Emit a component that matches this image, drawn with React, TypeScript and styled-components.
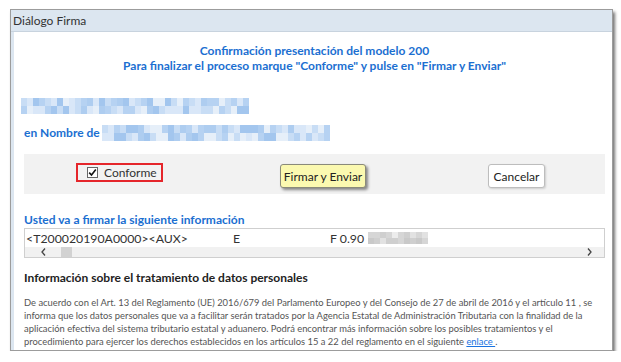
import React from 'react';
import styled, { createGlobalStyle } from 'styled-components';

const GlobalStyle = createGlobalStyle`
  html, body {
    margin: 0;
    padding: 0;
    background: #fff;
  }
  body {
    font-family: Lato, "Open Sans", sans-serif;
    color: #333;
  }
`;

const Page = styled.div`
  padding: 9px 0 0 10px;
`;

const Dialog = styled.div`
  width: 601px;
  border: 1px solid #9c9c9c;
  box-shadow: 2px 3px 3px rgba(0, 0, 0, 0.55);
  background: #fff;
`;

const TitleBar = styled.div`
  height: 21px;
  line-height: 21px;
  padding-left: 2px;
  background: #dce6f0;
  border-bottom: 1px solid #c8d3de;
  font-size: 12px;
  color: #333;
`;

const Body = styled.div`
  border-left: 3px solid #dce6f0;
  padding: 0 7px 2px 10px;
`;

const Heading = styled.div`
  padding-top: 11px;
  text-align: center;
  font-weight: 700;
  font-size: 12px;
  line-height: 15px;
  color: #1b6fd1;
`;

const BlueLabel = styled.div`
  font-weight: 700;
  font-size: 12px;
  line-height: 16px;
  color: #1b6fd1;
`;

const NameRow = styled.div`
  display: flex;
  align-items: center;
  height: 16px;
  margin-top: 11px;
  gap: 2px;
`;

const BlurGrid = styled.div<{ $cols: number; $w: number; $h: number; $mt?: number; $ml?: number }>`
  display: grid;
  grid-template-columns: repeat(${p => p.$cols}, ${p => p.$w}px);
  grid-auto-rows: ${p => p.$h}px;
  margin-top: ${p => p.$mt ?? 0}px;
  margin-left: ${p => p.$ml ?? 0}px;
  width: max-content;
`;

const BLUES = ['#a3c6ee', '#b6d2f2', '#c8ddf5', '#d9e7f8', '#aecdf0', '#e6eff9'];
const GRAYS = ['#c9c9c9', '#d6d6d6', '#e2e2e2', '#ececec', '#cfcfcf'];

const Blur = ({ cols, rows, w, h, palette, seed, mt, ml }: {
  cols: number; rows: number; w: number; h: number; palette: string[]; seed: number; mt?: number; ml?: number;
}) => {
  const cells = [];
  let s = seed;
  for (let r = 0; r < rows; r++) {
    for (let c = 0; c < cols; c++) {
      s = (s * 9301 + 49297) % 233280;
      const k = Math.floor((s / 233280) * palette.length);
      cells.push(<span key={r + '-' + c} style={{ background: palette[(k + r) % palette.length] }} />);
    }
  }
  return <BlurGrid $cols={cols} $w={w} $h={h} $mt={mt} $ml={ml}>{cells}</BlurGrid>;
};

const ActionPanel = styled.div`
  display: flex;
  align-items: flex-start;
  height: 40px;
  margin-top: 13px;
  padding: 9px 0 0 52px;
  box-sizing: border-box;
  background: #f2f2f2;
`;

const ConformeBox = styled.label`
  display: flex;
  align-items: center;
  width: 87px;
  height: 19px;
  box-sizing: border-box;
  border: 2px solid #e5262b;
  padding-left: 9px;
  gap: 6px;
  font-size: 12px;
  color: #333;
`;

const Check = styled.span`
  display: inline-flex;
  align-items: center;
  justify-content: center;
  width: 11px;
  height: 11px;
  box-sizing: border-box;
  border: 1px solid #666;
  background: #fff;
`;

const Button = styled.button<{ $primary?: boolean; $ml: number; $w: number }>`
  margin: 1px 0 0 ${p => p.$ml}px;
  width: ${p => p.$w}px;
  height: 24px;
  padding: 0;
  font-family: inherit;
  font-size: 12px;
  color: #222;
  border-radius: 3px;
  border: 1px solid ${p => (p.$primary ? '#8a8a7a' : '#bdbdbd')};
  background: ${p => (p.$primary ? '#fbf9b0' : '#fff')};
  box-shadow: ${p => (p.$primary ? '2px 2px 3px rgba(0,0,0,0.45)' : '1px 1px 2px rgba(0,0,0,0.15)')};
`;

const SectionLabel = styled(BlueLabel)`
  margin-top: 18px;
`;

const DataBox = styled.div`
  border: 1px solid #cfcfcf;
  height: 28px;
`;

const DataRow = styled.div`
  display: grid;
  grid-template-columns: 207px 97px 38px auto;
  align-items: center;
  height: 18px;
  padding-left: 1px;
  font-size: 12.3px;
  color: #333;
`;

const ScrollBar = styled.div`
  display: flex;
  align-items: stretch;
  height: 10px;
  background: #f1f1f1;
`;

const Arrow = styled.span<{ $w: number }>`
  display: flex;
  align-items: center;
  justify-content: center;
  width: ${p => p.$w}px;
`;

const Thumb = styled.span`
  width: 11px;
  background: #d2d2d2;
`;

const Spacer = styled.span`
  flex: 1;
`;

const InfoTitle = styled.div`
  margin-top: 12px;
  font-weight: 700;
  font-size: 12px;
  line-height: 16px;
  color: #222;
`;

const Para = styled.p`
  margin: 10px 0 0;
  font-size: 9.4px;
  line-height: 13px;
  color: #555;
`;

const Link = styled.a`
  color: #1a73e0;
  text-decoration: underline;
`;

const Chevron = ({ dir }: { dir: 'left' | 'right' }) => (
  <svg width="5" height="8" viewBox="0 0 5 8">
    <path
      d={dir === 'left' ? 'M4 0.5 L1 4 L4 7.5' : 'M1 0.5 L4 4 L1 7.5'}
      fill="none"
      stroke="#444"
      strokeWidth="1.3"
    />
  </svg>
);

export default function App() {
  return (
    <>
      <GlobalStyle />
      <Page>
        <Dialog>
          <TitleBar>Diálogo Firma</TitleBar>
          <Body>
            <Heading>
              Confirmación presentación del modelo 200
              <br />
              Para finalizar el proceso marque "Conforme" y pulse en "Firmar y Enviar"
            </Heading>
            <Blur cols={38} rows={2} w={6} h={8} palette={BLUES} seed={7} mt={25} ml={-3} />
            <NameRow>
              <BlueLabel>en Nombre de</BlueLabel>
              <Blur cols={38} rows={2} w={6} h={8} palette={BLUES} seed={31} />
            </NameRow>
            <ActionPanel>
              <ConformeBox>
                <Check>
                  <svg width="9" height="9" viewBox="0 0 9 9">
                    <path d="M1.2 4.6 L3.5 7 L7.8 1.6" fill="none" stroke="#111" strokeWidth="1.6" />
                  </svg>
                </Check>
                Conforme
              </ConformeBox>
              <Button $primary $ml={117} $w={86}>Firmar y Enviar</Button>
              <Button $ml={122} $w={57}>Cancelar</Button>
            </ActionPanel>
            <SectionLabel>Usted va a firmar la siguiente información</SectionLabel>
            <DataBox>
              <DataRow>
                <span>&lt;T200020190A0000&gt;&lt;AUX&gt;</span>
                <span>E</span>
                <span>F 0.90</span>
                <Blur cols={10} rows={2} w={6} h={6} palette={GRAYS} seed={3} />
              </DataRow>
              <ScrollBar>
                <Arrow $w={36}><Chevron dir="left" /></Arrow>
                <Thumb />
                <Spacer />
                <Arrow $w={30}><Chevron dir="right" /></Arrow>
              </ScrollBar>
            </DataBox>
            <InfoTitle>Información sobre el tratamiento de datos personales</InfoTitle>
            <Para>
              De acuerdo con el Art. 13 del Reglamento (UE) 2016/679 del Parlamento Europeo y del Consejo de 27 de abril de 2016 y el artículo 11 , se
              <br />
              informa que los datos personales que va a facilitar serán tratados por la Agencia Estatal de Administración Tributaria con la finalidad de la
              <br />
              aplicación efectiva del sistema tributario estatal y aduanero. Podrá encontrar más información sobre los posibles tratamientos y el
              <br />
              procedimiento para ejercer los derechos establecidos en los artículos 15 a 22 del reglamento en el siguiente <Link href="#">enlace </Link>.
            </Para>
          </Body>
        </Dialog>
      </Page>
    </>
  );
}
